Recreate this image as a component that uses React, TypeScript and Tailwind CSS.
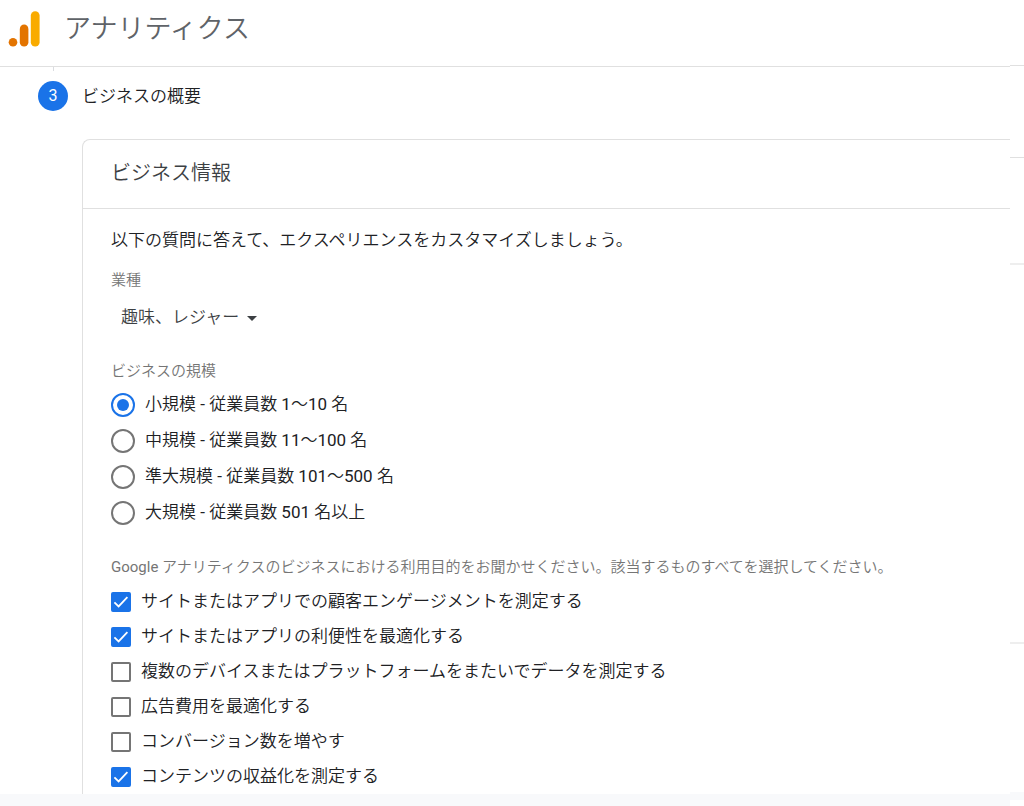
import { useState } from 'react';

const businessSizes = [
  { id: 'small', label: '小規模 - 従業員数 1～10 名' },
  { id: 'medium', label: '中規模 - 従業員数 11～100 名' },
  { id: 'large', label: '準大規模 - 従業員数 101～500 名' },
  { id: 'xlarge', label: '大規模 - 従業員数 501 名以上' },
];

const purposes = [
  { id: 'engagement', label: 'サイトまたはアプリでの顧客エンゲージメントを測定する' },
  { id: 'usability', label: 'サイトまたはアプリの利便性を最適化する' },
  { id: 'cross-device', label: '複数のデバイスまたはプラットフォームをまたいでデータを測定する' },
  { id: 'ad-cost', label: '広告費用を最適化する' },
  { id: 'conversion', label: 'コンバージョン数を増やす' },
  { id: 'monetize', label: 'コンテンツの収益化を測定する' },
];

function Logo() {
  return (
    <svg width="32" height="36" viewBox="0 0 32 36" aria-hidden="true">
      <circle cx="5" cy="31.2" r="4.3" fill="#e37400" />
      <rect x="11.8" y="13.6" width="8.6" height="22" rx="4.3" fill="#e37400" />
      <rect x="22.8" y="0.2" width="8.8" height="35.4" rx="4.4" fill="#f9ab00" />
    </svg>
  );
}

function Header() {
  return (
    <header className="flex h-[67px] items-start gap-6 border-b border-[#e0e0e0] pl-2 pt-[11px]">
      <Logo />
      <span className="text-[27px] leading-9 text-[#5f6368]">アナリティクス</span>
    </header>
  );
}

function SizeOptions() {
  const [size, setSize] = useState('small');

  return (
    <fieldset className="mt-[29px]">
      <legend className="text-[15px] leading-5 text-[#757575]">ビジネスの規模</legend>
      <div className="mt-1.5">
        {businessSizes.map((s) => (
          <label key={s.id} className="flex h-9 items-center gap-2.5 text-[17px]">
            <input
              type="radio"
              name="size"
              value={s.id}
              checked={size === s.id}
              onChange={() => setSize(s.id)}
              className="size-6 shrink-0 appearance-none rounded-full border-2 border-[#757575] bg-clip-content p-1 checked:border-[#1a73e8] checked:bg-[#1a73e8]"
            />
            {s.label}
          </label>
        ))}
      </div>
    </fieldset>
  );
}

function PurposeOptions() {
  const [selected, setSelected] = useState(['engagement', 'usability', 'monetize']);

  const toggle = (id: string) =>
    setSelected((prev) => (prev.includes(id) ? prev.filter((p) => p !== id) : [...prev, id]));

  return (
    <fieldset className="mt-[26px]">
      <legend className="text-[15px] leading-5 text-[#757575]">
        Google アナリティクスのビジネスにおける利用目的をお聞かせください。該当するものすべてを選択してください。
      </legend>
      <div className="mt-[7px]">
        {purposes.map((p) => (
          <label key={p.id} className="flex h-[35px] items-center gap-2.5 text-[17px]">
            <span className="grid size-5 shrink-0">
              <input
                type="checkbox"
                checked={selected.includes(p.id)}
                onChange={() => toggle(p.id)}
                className="peer col-start-1 row-start-1 size-5 appearance-none rounded-xs border-2 border-[#757575] checked:border-[#1a73e8] checked:bg-[#1a73e8]"
              />
              <svg
                viewBox="0 0 20 20"
                className="pointer-events-none invisible col-start-1 row-start-1 size-5 peer-checked:visible"
                fill="none"
                stroke="#fff"
                strokeWidth="1.8"
                aria-hidden="true"
              >
                <path d="M3.4 10.4 7.6 14.4 16.4 5.2" />
              </svg>
            </span>
            {p.label}
          </label>
        ))}
      </div>
    </fieldset>
  );
}

function BusinessCard() {
  return (
    <section className="ml-[82px] rounded-tl-lg border-l border-t border-[#e0e0e0]">
      <h2 className="border-b border-[#e0e0e0] pb-[21px] pl-7 pt-[19px] text-xl leading-7 text-[#3c4043]">
        ビジネス情報
      </h2>
      <div className="pl-7 pt-[19px]">
        <p className="text-[17px] leading-6">以下の質問に答えて、エクスペリエンスをカスタマイズしましょう。</p>
        <label htmlFor="industry" className="mt-[18px] block text-[15px] leading-5 text-[#757575]">
          業種
        </label>
        <div className="mt-3.5 flex items-center gap-2 pl-2.5">
          <select
            id="industry"
            className="h-7 field-sizing-content appearance-none bg-transparent text-[17px] text-[#3c4043]"
          >
            <option>趣味、レジャー</option>
          </select>
          <svg width="10" height="5" viewBox="0 0 10 5" className="pointer-events-none" aria-hidden="true">
            <path d="M0 0h10L5 5z" fill="#3c4043" />
          </svg>
        </div>
        <SizeOptions />
        <PurposeOptions />
      </div>
    </section>
  );
}

export default function App() {
  return (
    <div className="flex min-h-screen bg-white font-['Roboto','Noto_Sans_CJK_JP_DemiLight','Noto_Sans_CJK_JP',sans-serif] text-[#202124]">
      <div className="flex min-w-0 flex-1 flex-col">
        <Header />
        <main>
          <div className="ml-[53px] h-1 border-l border-[#dadce0]" />
          <div className="mb-7 ml-[38px] mt-2.5 flex items-center gap-3.5">
            <span className="flex size-[30px] items-center justify-center rounded-full bg-[#1a73e8] text-base text-white">
              3
            </span>
            <h1 className="text-[17px] leading-6">ビジネスの概要</h1>
          </div>
          <BusinessCard />
        </main>
        <div className="min-h-3 flex-1 bg-[#f8f9fb]" />
      </div>
      <aside className="flex w-3.5 shrink-0 flex-col">
        <div className="h-[66px] border-b border-[#e0e0e0]" />
        <div className="h-[92px] border-b border-[#e0e0e0]" />
        <div className="h-[107px] border-b-2 border-[#eeeeee]" />
        <div className="h-[379px] border-b-2 border-[#eeeeee]" />
        <div className="flex-1" />
        <div className="mb-1.5 h-2 bg-[#f8f9fb]" />
      </aside>
    </div>
  );
}
